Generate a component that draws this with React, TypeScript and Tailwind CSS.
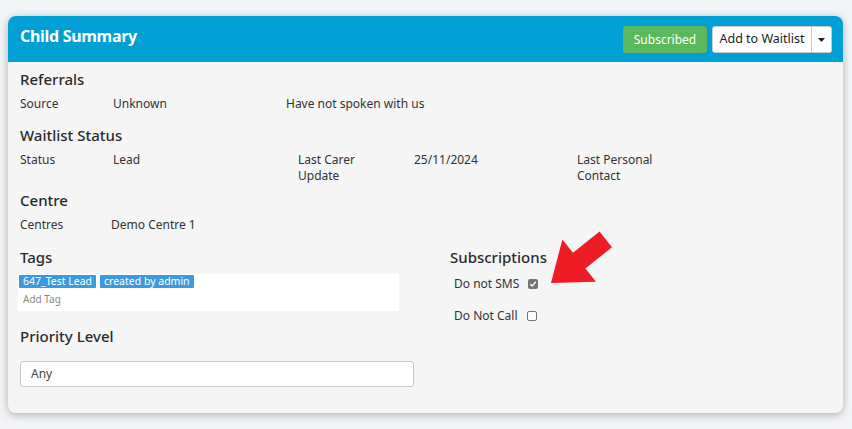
import React from 'react';

const font = { fontFamily: '"Noto Sans", "Open Sans", sans-serif' };

function InfoRow({ cells }: { cells: { text: React.ReactNode; w: string }[] }) {
  return (
    <div className="flex text-[12px] leading-[16px] text-[#333]">
      {cells.map((c, i) => (
        <div key={i} className={c.w}>
          {c.text}
        </div>
      ))}
    </div>
  );
}

function Heading({ children, className = '' }: { children: React.ReactNode; className?: string }) {
  return (
    <div className={'h-[20px] text-[15px] leading-[20px] font-medium text-[#2b2b2b] ' + className}>
      {children}
    </div>
  );
}

function Checkbox({ checked }: { checked?: boolean }) {
  if (checked) {
    return (
      <div className="flex h-[10px] w-[10px] items-center justify-center rounded-[2px] bg-[#767676]">
        <svg width="8" height="8" viewBox="0 0 8 8">
          <path d="M1.2 4.2 L3.2 6 L6.8 1.8" stroke="white" strokeWidth="1.4" fill="none" />
        </svg>
      </div>
    );
  }
  return <div className="h-[10px] w-[10px] rounded-[2px] border border-[#767676] bg-white" />;
}

export default function App() {
  return (
    <div className="h-[429px] w-[852px] bg-[#f3f4f6] px-[8px] pt-[16px]" style={font}>
      <div className="relative h-[397px] w-[835px] overflow-hidden rounded-lg bg-[#f5f5f5] shadow-[0_2px_8px_rgba(0,0,0,0.28)]">
        <div className="flex h-[46px] items-center justify-between bg-[#009fd4] pl-[12px] pr-[11px]">
          <div className="mb-[7px] text-[16px] font-bold tracking-[-0.3px] text-white">Child Summary</div>
          <div className="flex items-center pt-[1px]">
            <div className="flex h-[27px] w-[84px] items-center justify-center rounded-[3px] bg-[#5cb85c] text-[12px] text-white">
              Subscribed
            </div>
            <div className="ml-[5px] flex h-[27px] w-[100px] items-center justify-center rounded-l-[3px] border border-[#ccc] bg-white text-[12.5px] text-[#222]">
              Add to Waitlist
            </div>
            <div className="flex h-[27px] w-[20px] items-center justify-center rounded-r-[3px] border border-l-0 border-[#ccc] bg-white">
              <svg width="7" height="4" viewBox="0 0 7 4">
                <path d="M0 0 H7 L3.5 4 Z" fill="#222" />
              </svg>
            </div>
          </div>
        </div>

        <div className="px-[12px] pt-[7px]">
          <Heading>Referrals</Heading>
          <div className="mt-[7px]">
            <InfoRow
              cells={[
                { text: 'Source', w: 'w-[93px]' },
                { text: 'Unknown', w: 'w-[173px]' },
                { text: 'Have not spoken with us', w: 'w-[200px]' },
              ]}
            />
          </div>
          <Heading className="mt-[13px]">Waitlist Status</Heading>
          <div className="mt-[7px]">
            <InfoRow
              cells={[
                { text: 'Status', w: 'w-[93px]' },
                { text: 'Lead', w: 'w-[185px]' },
                { text: <>Last Carer<br />Update</>, w: 'w-[116px]' },
                { text: '25/11/2024', w: 'w-[163px]' },
                { text: <>Last Personal<br />Contact</>, w: 'w-[120px]' },
              ]}
            />
          </div>
          <Heading className="mt-[6px]">Centre</Heading>
          <div className="mt-[7px]">
            <InfoRow
              cells={[
                { text: 'Centres', w: 'w-[91px]' },
                { text: 'Demo Centre 1', w: 'w-[150px]' },
              ]}
            />
          </div>

          <div className="mt-[14px] flex">
            <div className="w-[394px]">
              <Heading>Tags</Heading>
              <div className="ml-[-2px] mt-[7px] h-[37px] w-[381px] bg-white pl-[1px] pt-[1px]">
                <div className="flex gap-[4px]">
                  <span className="rounded-[1px] bg-[#3a9bdc] px-[4px] text-[10.5px] leading-[13px] text-white">647_Test Lead</span>
                  <span className="rounded-[1px] bg-[#3a9bdc] px-[4px] text-[10.5px] leading-[13px] text-white">created by admin</span>
                </div>
                <div className="ml-[4px] mt-[4px] text-[10px] leading-[14px] text-[#8a8a7a]">Add Tag</div>
              </div>
              <Heading className="mt-[15px]">Priority Level</Heading>
              <div className="mt-[15px] flex h-[26px] w-[394px] items-center rounded-[3px] border border-[#c8c8c8] bg-white pl-[10px] text-[12px] text-[#444]">
                Any
              </div>
            </div>
            <div className="ml-[36px]">
              <Heading>Subscriptions</Heading>
              <div className="ml-[4px] mt-[9px] flex items-center text-[12px] leading-[16px] text-[#333]">
                <span className="w-[74px]">Do not SMS</span>
                <Checkbox checked />
              </div>
              <div className="ml-[4px] mt-[16px] flex items-center text-[12px] leading-[16px] text-[#333]">
                <span className="w-[73px]">Do Not Call</span>
                <Checkbox />
              </div>
            </div>
          </div>
        </div>
      </div>

      <svg className="absolute left-0 top-0" width="852" height="429" viewBox="0 0 852 429">
        <polygon
          transform="translate(551 283) rotate(141.5) translate(-70 0)"
          points="0,-10 34,-10 34,-27 70,0 34,27 34,10 0,10"
          fill="#ee1c25"
        />
      </svg>
    </div>
  );
}
